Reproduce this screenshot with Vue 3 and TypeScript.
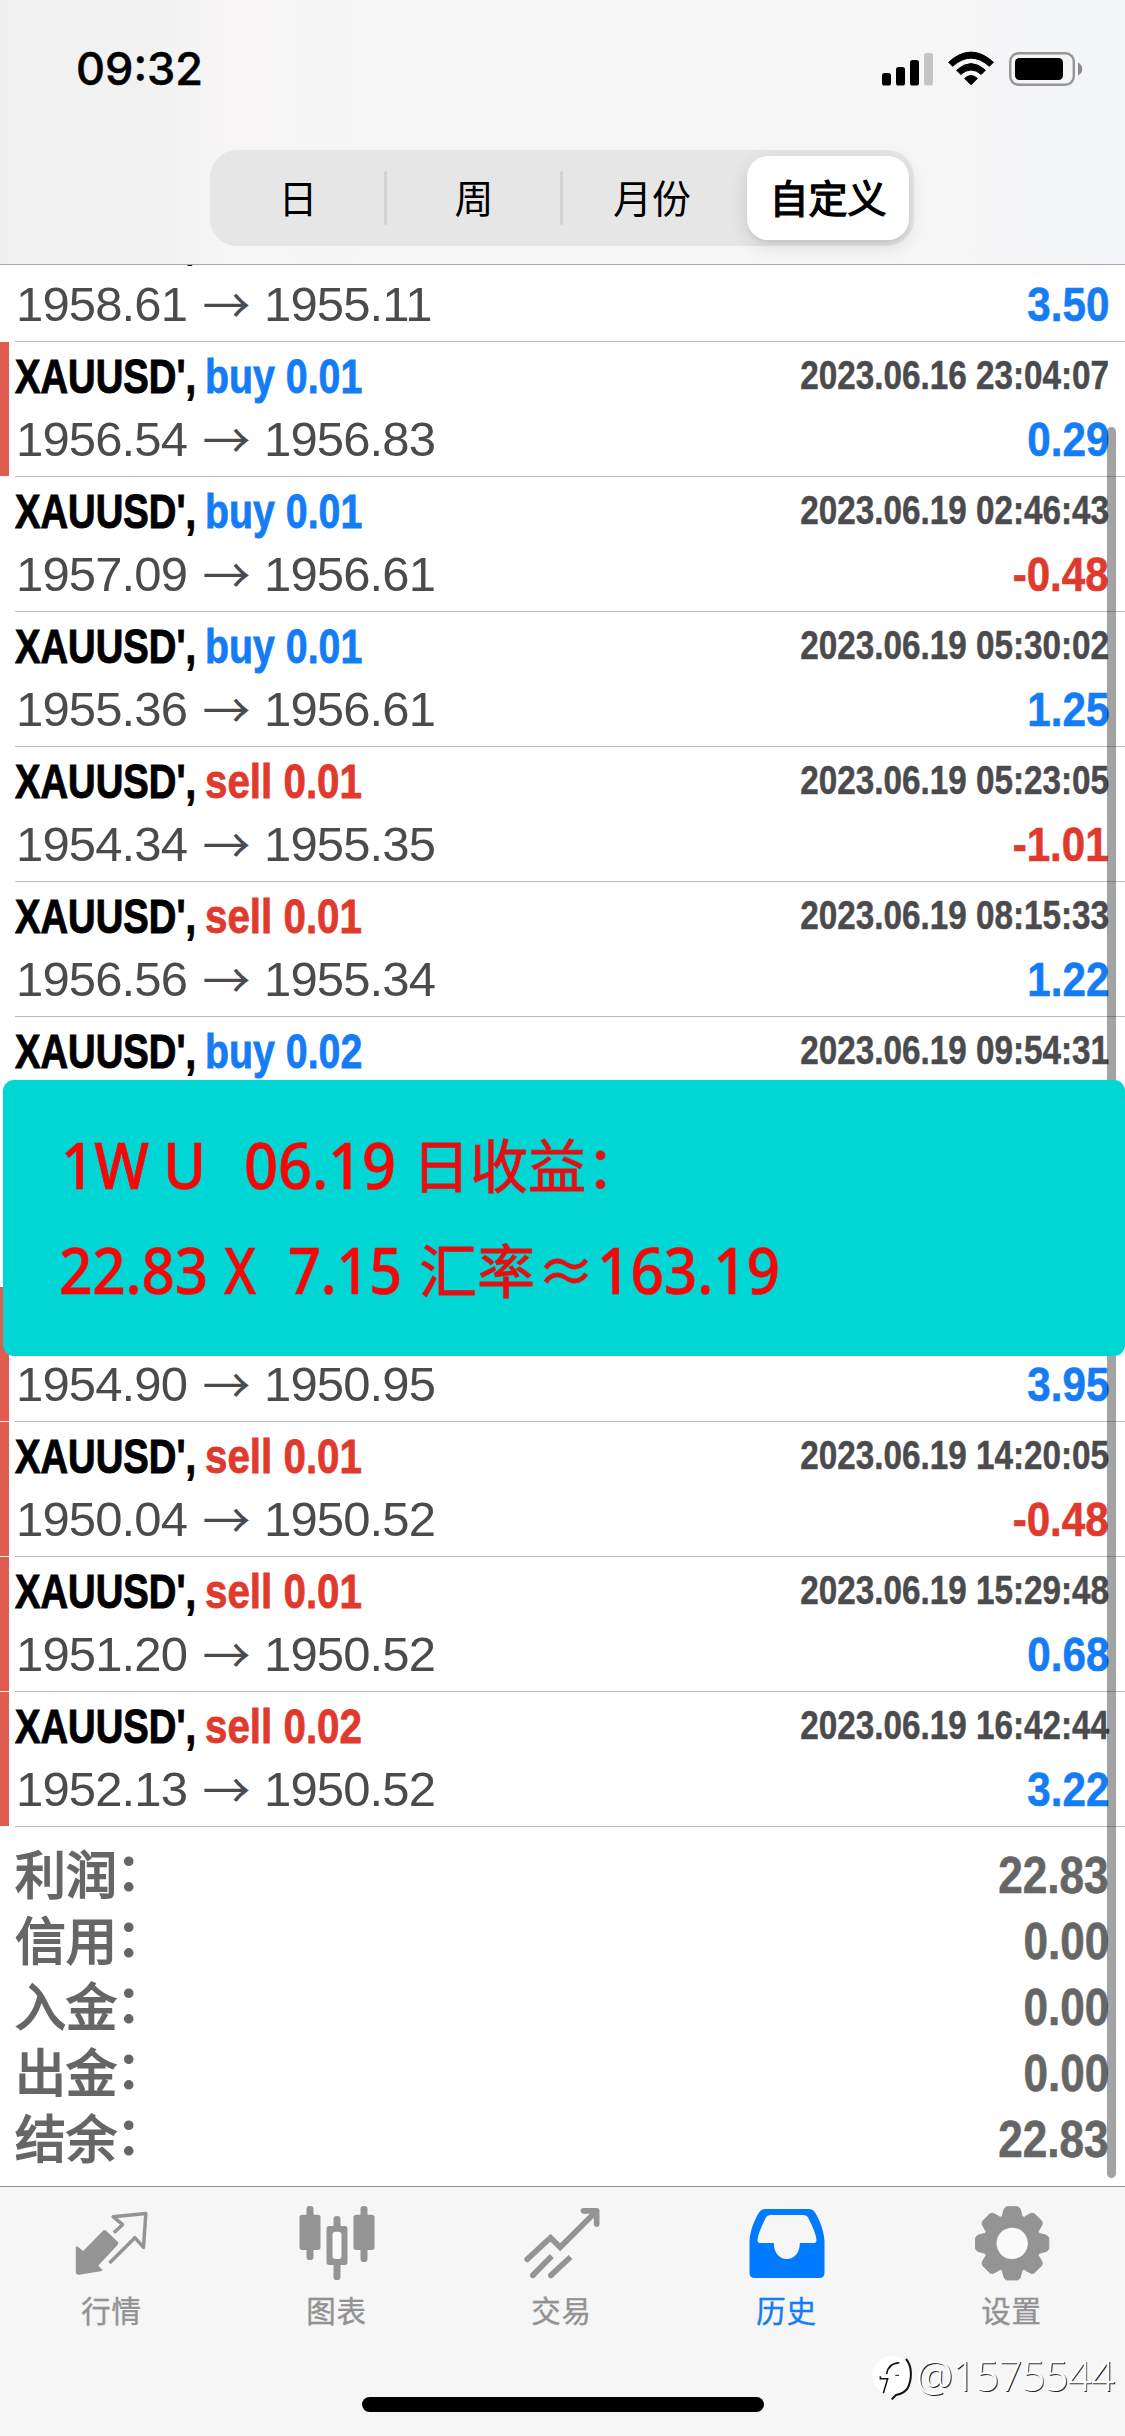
<script setup lang="ts">
interface Deal {
  side: 'buy' | 'sell'
  lots: string
  time: string
  open: string
  close: string
  profit: string
  marked?: boolean
  covered?: boolean
}

const segments: string[] = ['日', '周', '月份', '自定义']

const deals: Deal[] = [
  { side: 'sell', lots: '', time: '', open: '1958.61', close: '1955.11', profit: '3.50' },
  { side: 'buy', lots: '0.01', time: '2023.06.16 23:04:07', open: '1956.54', close: '1956.83', profit: '0.29', marked: true },
  { side: 'buy', lots: '0.01', time: '2023.06.19 02:46:43', open: '1957.09', close: '1956.61', profit: '-0.48' },
  { side: 'buy', lots: '0.01', time: '2023.06.19 05:30:02', open: '1955.36', close: '1956.61', profit: '1.25' },
  { side: 'sell', lots: '0.01', time: '2023.06.19 05:23:05', open: '1954.34', close: '1955.35', profit: '-1.01' },
  { side: 'sell', lots: '0.01', time: '2023.06.19 08:15:33', open: '1956.56', close: '1955.34', profit: '1.22' },
  { side: 'buy', lots: '0.02', time: '2023.06.19 09:54:31', open: '', close: '', profit: '' },
  { side: 'sell', lots: '', time: '', open: '', close: '', profit: '', covered: true },
  { side: 'sell', lots: '', time: '', open: '1954.90', close: '1950.95', profit: '3.95', marked: true, covered: true },
  { side: 'sell', lots: '0.01', time: '2023.06.19 14:20:05', open: '1950.04', close: '1950.52', profit: '-0.48', marked: true },
  { side: 'sell', lots: '0.01', time: '2023.06.19 15:29:48', open: '1951.20', close: '1950.52', profit: '0.68', marked: true },
  { side: 'sell', lots: '0.02', time: '2023.06.19 16:42:44', open: '1952.13', close: '1950.52', profit: '3.22', marked: true },
]

const totals: [string, string][] = [
  ['利润', '22.83'],
  ['信用', '0.00'],
  ['入金', '0.00'],
  ['出金', '0.00'],
  ['结余', '22.83'],
]

// Outline of the eight-tooth settings gear
const profile: [number, number][] = [
  [86, -20], [92, -18], [107, -12.5], [111, -8.5], [111, 8.5], [107, 12.5], [92, 18], [86, 20],
]
const gear = Array.from({ length: 8 }, (_, k) =>
  profile
    .map(([r, a]) => {
      const t = ((k * 45 + a) * Math.PI) / 180
      return `${(635 + r * Math.sin(t)).toFixed(1)},${(220 - r * Math.cos(t)).toFixed(1)}`
    })
    .join(' '),
).join(' ')
</script>

<template>
  <div class="screen">
    <header class="top">
      <div class="status">
        <span class="clock">09:32</span>
        <svg class="indicators" width="204" height="40" viewBox="880 49 204 40">
          <rect x="882" y="73" width="9" height="12.5" rx="2.6" />
          <rect x="896" y="67" width="9" height="18.5" rx="2.6" />
          <rect x="910" y="60" width="9" height="25.5" rx="2.6" />
          <rect x="924" y="53" width="9" height="32.5" rx="2.6" fill="#c4c4c4" />
          <path d="M948.6 62.2 Q971 42 993.4 62.2 L989.4 66.3 Q971 50 952.6 66.3Z" stroke="#000" stroke-width="1" stroke-linejoin="round" />
          <path d="M956.6 70.2 Q971 57 985.4 70.2 L981.2 74.4 Q971 65.6 960.8 74.4Z" stroke="#000" stroke-width="1" stroke-linejoin="round" />
          <path d="M964.6 78.4 Q971 72.6 977.4 78.4 L971 84.8Z" stroke="#000" stroke-width="1" stroke-linejoin="round" />
          <rect x="1010.2" y="53.2" width="63.6" height="31.6" rx="8.5" fill="none" stroke="#969696" stroke-width="2.4" />
          <rect x="1015" y="58" width="48" height="22" rx="4.5" />
          <path d="M1078 62.5 Q1082.2 64.5 1082.2 69 Q1082.2 73.5 1078 75.5Z" fill="#8c8c8c" />
        </svg>
      </div>
      <nav class="segmented">
        <div v-for="(s, i) in segments" :key="s" class="segment" :class="{ active: i === 3, ruled: i < 2 }">{{ s }}</div>
      </nav>
    </header>

    <main class="list">
      <div v-for="(d, i) in deals" :key="i" class="slot" :class="{ first: i === 0 }">
        <section class="deal">
          <div class="mark" :class="{ on: d.marked }"></div>
          <div class="body">
            <div class="line">
              <span class="symbol"><b v-if="!d.covered">XAUUSD',</b></span>
              <span v-if="d.lots" class="side" :class="d.side">{{ d.side }} {{ d.lots }}</span>
              <span class="time">{{ d.time }}</span>
            </div>
            <div class="line prices">
              <template v-if="d.open">
                <span class="price">{{ d.open }}</span>
                <span class="arrow">→</span>
                <span class="price">{{ d.close }}</span>
                <span class="profit" :class="{ loss: d.profit.startsWith('-') }">{{ d.profit }}</span>
              </template>
            </div>
          </div>
        </section>
      </div>
      <div class="totals">
        <div v-for="[label, value] in totals" :key="label" class="total">
          <span class="label">{{ label }}<i>：</i></span>
          <span class="value">{{ value }}</span>
        </div>
      </div>
    </main>

    <footer class="tabs">
      <div class="tab">
        <svg viewBox="202.5 90 270 270">
          <path d="M230 229 L248 243 L307 183 Q312 178 317 182 L350 214 Q356 219 351 225 L293 287 L306 299 Q305 303 300 304 L236 314 Q226 315 226 305 V230Z" fill="#949494" />
          <path d="M340 188 L366 164 L338 140 L436 130.500 L429 232 L403 203 L327 279" fill="none" stroke="#949494" stroke-width="10.500" stroke-linejoin="round" />
        </svg>
        <span>行情</span>
      </div>
      <div class="tab">
        <svg viewBox="877.5 90 270 270" fill="#949494">
          <rect x="918" y="108" width="21" height="162" rx="10" />
          <rect x="897" y="134" width="63" height="106" rx="8" />
          <rect x="1080" y="108" width="21" height="168" rx="10" />
          <rect x="1059" y="134" width="63" height="106" rx="8" />
          <rect x="999" y="138" width="21" height="192" rx="10" />
          <rect x="978" y="168" width="63" height="117" rx="8" />
          <rect x="996" y="185" width="27" height="82" rx="9" fill="#fafafa" />
        </svg>
        <span>图表</span>
      </div>
      <div class="tab">
        <svg viewBox="352.5 90 270 270" fill="none" stroke="#949494" stroke-width="17">
          <path d="M380 268 L450 203 L479 232 L586 125" stroke-linecap="round" />
          <path d="M549 122.500 H588.500 V162" stroke-linecap="round" stroke-linejoin="round" />
          <path d="M397 316 L454 258 M451 316 L510 261" />
          <path d="M397 316 h.01 M451 316 h.01" stroke-linecap="round" />
        </svg>
        <span>交易</span>
      </div>
      <div class="tab current">
        <svg viewBox="1027.5 90 270 270" fill="#007aff">
          <path fill-rule="evenodd" d="M1047 212 C1049 180 1062 150 1075 128 Q1082 117 1094 117 H1225 Q1237 117 1244 128 C1257 150 1270 180 1272 212 V308 Q1272 324 1256 324 H1063 Q1047 324 1047 308Z M1071 209 C1074 186 1087 163 1095 145 Q1100 135 1111 135 H1208 Q1219 135 1224 145 C1232 163 1245 186 1248 209 Q1248 219 1240 219 H1198 C1198 249 1181 267 1159 267 C1137 267 1120 249 1120 219 H1079 Q1071 219 1071 209Z" />
        </svg>
        <span>历史</span>
      </div>
      <div class="tab">
        <svg viewBox="502.5 90 270 270">
          <polygon :points="gear" fill="#949494" stroke="#949494" stroke-width="3" stroke-linejoin="round" />
          <circle cx="635" cy="220" r="47" fill="#fafafa" />
        </svg>
        <span>设置</span>
      </div>
    </footer>

    <div class="home-bar"></div>
    <div class="scrollbar"></div>

    <div class="banner">
      <svg width="1122" height="276" viewBox="3 1080 1122 276">
        <g class="latin">
          <text x="61" y="1189" textLength="88" lengthAdjust="spacingAndGlyphs">1W</text>
          <text x="163" y="1189" textLength="43" lengthAdjust="spacingAndGlyphs">U</text>
          <text x="244" y="1189" textLength="152" lengthAdjust="spacingAndGlyphs">06.19</text>
          <text x="59" y="1294" textLength="149" lengthAdjust="spacingAndGlyphs">22.83</text>
          <text x="224" y="1294" textLength="32" lengthAdjust="spacingAndGlyphs">X</text>
          <text x="288" y="1294" textLength="114" lengthAdjust="spacingAndGlyphs">7.15</text>
          <text x="597" y="1294" textLength="183" lengthAdjust="spacingAndGlyphs">163.19</text>
        </g>
        <g class="han">
          <text x="412" y="1188">日收益：</text>
          <text x="419" y="1293">汇率</text>
          <text x="537" y="1293">≈</text>
        </g>
      </svg>
    </div>

    <div class="watermark">
      <svg width="42" height="48" viewBox="216 555 126 144">
        <circle cx="275" cy="616" r="58" fill="#fff" />
        <g fill="none" stroke="#111" stroke-width="4.500">
          <path d="M260 612 Q264 580 298 578" />
          <path d="M241 619 V626 H263 L250 670" />
          <path d="M318 567 C338 590 336 630 322 656 Q312 670 288 675 L275 688" stroke-width="6" />
          <path d="M286 616 H297" stroke-width="3" />
        </g>
      </svg>
      <span>@1575544</span>
    </div>
  </div>
</template>

<style>
body {
  margin: 0;
  background: #fff;
}
</style>

<style scoped>
.screen {
  position: relative;
  display: flex;
  flex-direction: column;
  width: 1125px;
  height: 2436px;
  overflow: hidden;
  background: #fff;
  font-family: 'Liberation Sans', 'Noto Sans CJK SC', sans-serif;
}
.top {
  box-sizing: border-box;
  flex: none;
  height: 265px;
  border-bottom: 1px solid #a9a9ab;
  background: linear-gradient(90deg, #f0f0f0 0, #f2f2f2 150px, #f7f5f5 230px, #f6f6f6 420px, #f6f6f6 900px, #f4f5f8 1125px);
}
.status {
  display: flex;
  justify-content: space-between;
  height: 150px;
  padding: 0 41px 0 76px;
}
.clock {
  margin-top: 41px;
  font: 500 45px/56px Inter, sans-serif;
  letter-spacing: 0;
  -webkit-text-stroke: 0.5px #000;
}
.indicators {
  margin-top: 49px;
}
.segmented {
  display: flex;
  width: 704px;
  height: 96px;
  margin-left: 210px;
  border-radius: 27px;
  background: #e7e6e7;
}
.segment {
  position: relative;
  flex: 1;
  font: 400 39px/92px 'Noto Sans CJK SC', sans-serif;
  text-align: center;
}
.segment:nth-child(3) {
  left: 2px;
}
.ruled::after {
  content: '';
  position: absolute;
  right: -1px;
  top: 21px;
  width: 3px;
  height: 54px;
  border-radius: 2px;
  background: #d2d1d3;
}
.segment.active {
  flex: none;
  width: 162px;
  height: 84px;
  margin: 6px 5px 6px 9px;
  border-radius: 21px;
  background: #fff;
  box-shadow: 0 6px 18px rgba(0, 0, 0, 0.12), 0 3px 3px rgba(0, 0, 0, 0.04);
  line-height: 80px;
  -webkit-text-stroke: 1.3px #000;
}
.list {
  flex: none;
  height: 1921px;
  overflow: hidden;
}
.slot {
  display: flex;
  flex-direction: column;
  justify-content: flex-end;
  height: 135px;
  overflow: hidden;
}
.slot.first {
  height: 77px;
}
.deal {
  display: flex;
  flex: none;
  height: 135px;
}
.mark {
  width: 9px;
  height: 134px;
  margin-right: 6px;
}
.mark.on {
  background: #e15c50;
}
.body {
  box-sizing: border-box;
  flex: 1;
  height: 135px;
  padding: 7px 16px 0 0;
  border-bottom: 1px solid #bcbcbe;
}
.line {
  display: flex;
  height: 54px;
  font-size: 49px;
  line-height: 54px;
  white-space: nowrap;
}
.symbol {
  width: 190px;
  transform: scaleX(0.78);
  transform-origin: 0 0;
  -webkit-text-stroke: 1px #000;
}
.side {
  font-weight: 700;
  transform-origin: 0 0;
  -webkit-text-stroke: 0.8px currentColor;
}
.side.buy {
  color: #147cf6;
  transform: scaleX(0.802);
}
.side.sell {
  color: #df3a2d;
  transform: scaleX(0.823);
}
.time {
  width: 400px;
  margin: -1px 0 0 auto;
  color: #4b4b4e;
  font-size: 40px;
  font-weight: 700;
  text-align: right;
  transform: scaleX(0.831);
  transform-origin: 100% 0;
  -webkit-text-stroke: 0.5px currentColor;
}
.prices {
  margin-top: 9px;
  color: #4b4b4e;
}
.price {
  width: 174px;
  padding-left: 1px;
  letter-spacing: -0.85px;
}
.arrow {
  width: 73px;
  margin-top: -2px;
  font-family: 'Noto Sans CJK SC', sans-serif;
  font-size: 48px;
  text-align: center;
}
.profit {
  margin-left: auto;
  color: #147cf6;
  font-weight: 700;
  transform: scaleX(0.86);
  transform-origin: 100% 0;
  -webkit-text-stroke: 0.6px currentColor;
}
.profit.loss {
  color: #df3a2d;
}
.totals {
  padding: 16px 16px 0 15px;
}
.total {
  display: flex;
  justify-content: space-between;
  height: 66px;
  color: #666;
  line-height: 66px;
}
.label {
  margin-top: -4px;
  font-family: 'Noto Sans CJK SC', sans-serif;
  font-size: 51px;
  -webkit-text-stroke: 1.8px #666;
}
.label i {
  position: relative;
  top: -4px;
  left: -1px;
  font-style: normal;
}
.value {
  font-size: 51px;
  font-weight: 700;
  transform: scaleX(0.865);
  transform-origin: 100% 0;
  -webkit-text-stroke: 0.6px #666;
}
.tabs {
  box-sizing: border-box;
  display: flex;
  flex: none;
  height: 250px;
  border-top: 1px solid #8f8f8f;
  background: #f6f6f6;
}
.tab {
  display: flex;
  flex: 1;
  flex-direction: column;
  align-items: center;
  padding-top: 13px;
  color: #929292;
  font: 400 29.5px/40px 'Noto Sans CJK SC', sans-serif;
  -webkit-text-stroke: 0.4px currentColor;
}
.tab svg {
  width: 90px;
  height: 90px;
}
.tab span {
  margin: -1px 2px 0 0;
  letter-spacing: 0.8px;
}
.tab.current {
  color: #147cf6;
}
.home-bar {
  position: absolute;
  left: 362px;
  top: 2397px;
  width: 402px;
  height: 15px;
  border-radius: 8px;
  background: #000;
}
.scrollbar {
  position: absolute;
  left: 1107px;
  top: 427px;
  width: 9px;
  height: 1751px;
  border-radius: 5px;
  background: rgba(0, 0, 0, 0.36);
}
.banner {
  position: absolute;
  left: 3px;
  top: 1080px;
  width: 1122px;
  height: 276px;
  border-radius: 11px;
  background: #00d7d5;
}
.banner svg {
  display: block;
}
.latin {
  fill: #f80505;
  stroke: #f80505;
  stroke-width: 0.6px;
  font: 500 64px 'Noto Sans', 'Open Sans', sans-serif;
}
.han {
  fill: #e50f12;
  stroke: #e50f12;
  stroke-width: 0.8px;
  font: 400 58px 'Noto Sans CJK SC', sans-serif;
}
.watermark {
  position: absolute;
  left: 872px;
  top: 2351px;
  display: flex;
  gap: 2px;
}
.watermark svg {
  margin-top: 4px;
}
.watermark span {
  color: #fff;
  font: 300 43px/48px 'Noto Sans', sans-serif;
  transform: scaleX(0.965);
  transform-origin: 0 0;
  letter-spacing: -0.6px;
  text-shadow: 1px 1px 0 #222;
}
</style>
